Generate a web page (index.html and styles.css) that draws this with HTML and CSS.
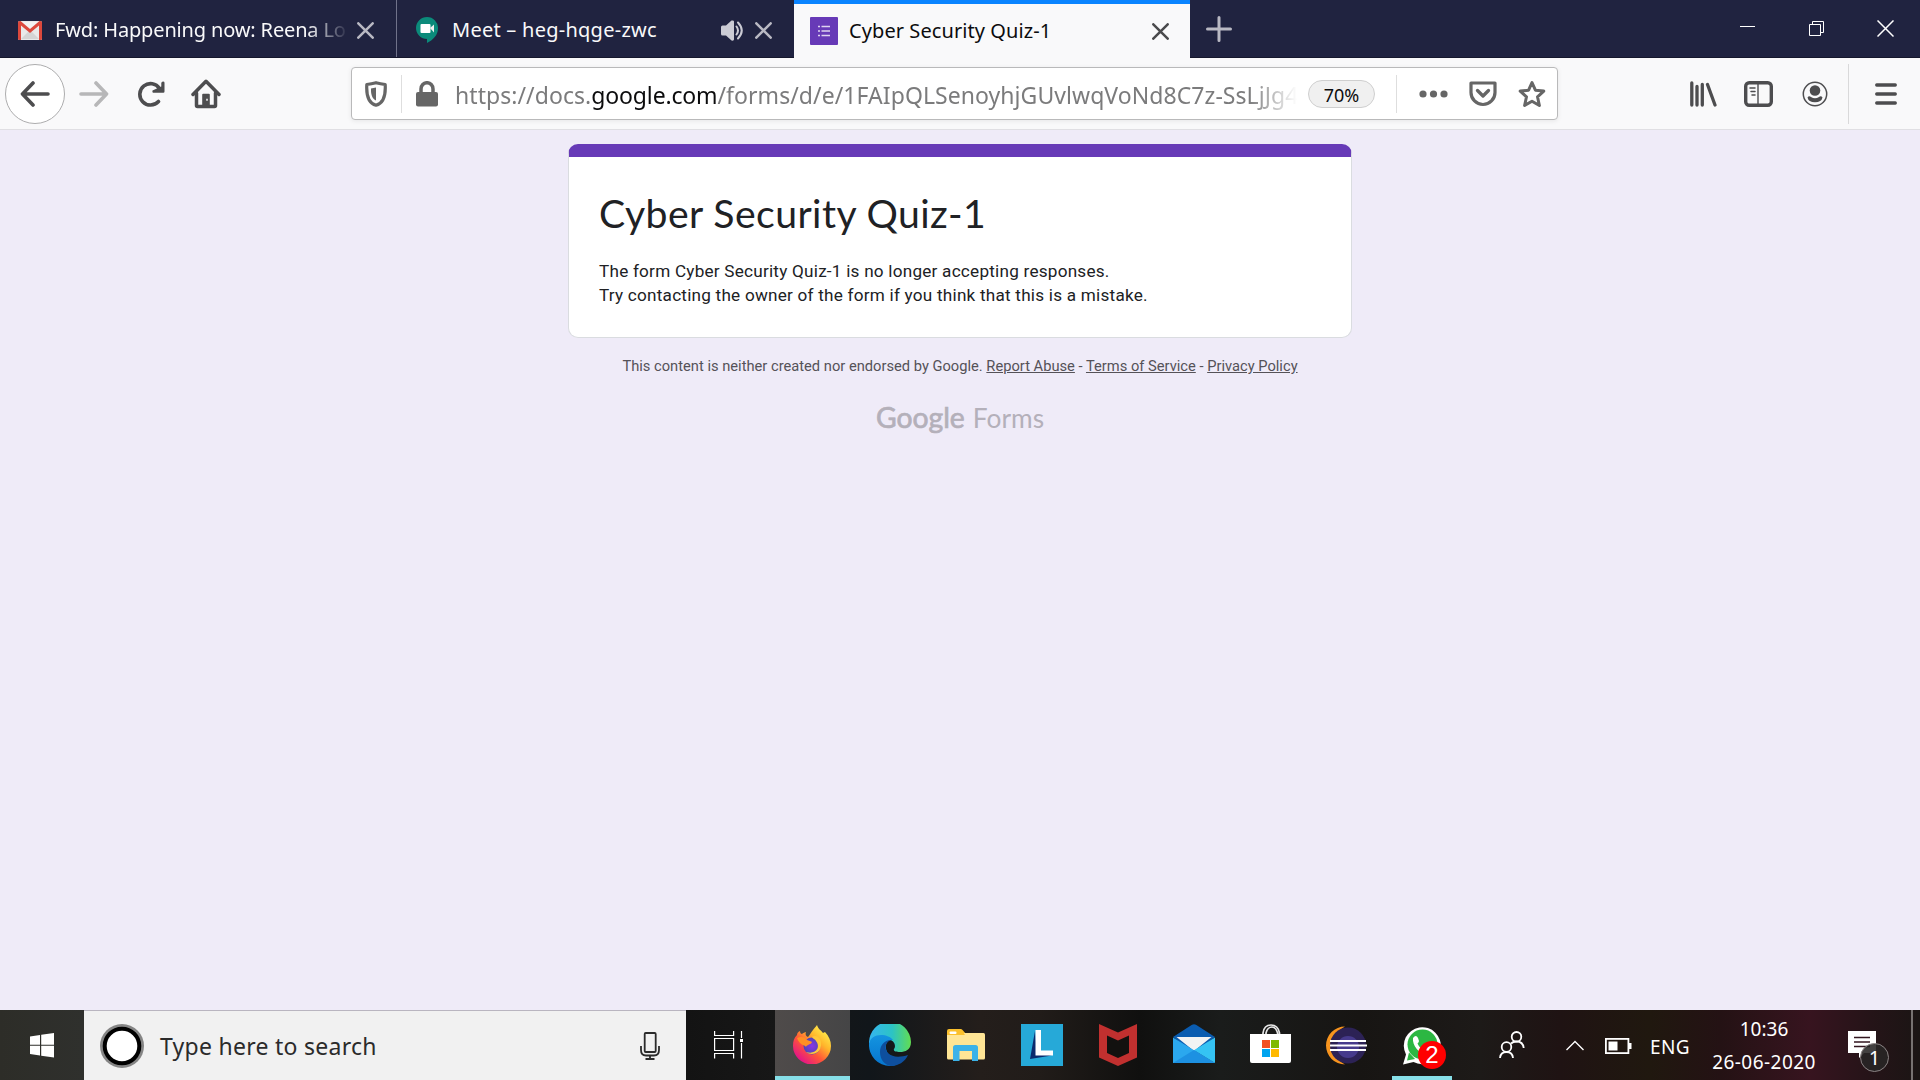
FILE: index.html
```html
<!DOCTYPE html>
<html lang="en">
<head>
<meta charset="utf-8">
<title>Cyber Security Quiz-1</title>
<link rel="stylesheet" href="styles.css">
</head>
<body>
<header class="tabs">
  <div class="tab">
    <svg class="gmail" width="24" height="19" viewBox="0 0 24 19"><rect width="24" height="19" rx="1.5" fill="#e9e9e9"/><path d="M3 18 12 9l9 9z" fill="#d4d4d4"/><path d="M3 3l9 9 9-9v-2H3z" fill="#f2f2f2"/><path d="M0 1.5Q0 0 1.5 0H2.500L12 8 21.500 0h1Q24 0 24 1.500V17.500Q24 19 22.500 19H21V4.500L12 12 3 4.500V19H1.500Q0 19 0 17.500z" fill="#dc483c"/></svg>
    <span class="tab-title fade">Fwd: Happening now: Reena Lo</span>
    <svg class="close" width="17" height="17" viewBox="0 0 17 17"><path d="M1.300 1.300 15.700 15.700M15.700 1.300 1.300 15.700" stroke="#b9b9c3" stroke-width="2.500" stroke-linecap="round"/></svg>
  </div>
  <div class="tab meet-tab">
    <svg class="meet" width="22" height="26" viewBox="0 0 22 26"><path d="M11 0a11 11 0 0 1 11 11.500C22 18 17 23 11 26v-4A11 11 0 0 1 11 0z" fill="#0b8a7a"/><rect x="4.500" y="7" width="10" height="9" rx="1" fill="#fff"/><path d="M14 11l4-3.500v8z" fill="#f0f0f0"/></svg>
    <span class="tab-title">Meet – heg-hqge-zwc</span>
    <svg class="speaker" width="24" height="21" viewBox="0 0 24 21"><path d="M0 7Q0 5.500 1.500 5.500H5L10.500.500Q13 0 13 1.500v18Q13 21 10.500 20.500L5 15.500H1.500Q0 15.500 0 14z" fill="#cbcbd4"/><path d="M15.500 6.500q3 4 0 8M17 2.500q7.500 8 0 16" fill="none" stroke="#cbcbd4" stroke-width="2" stroke-linecap="round"/></svg>
    <svg class="close" width="17" height="17" viewBox="0 0 17 17"><path d="M1.300 1.300 15.700 15.700M15.700 1.300 1.300 15.700" stroke="#b9b9c3" stroke-width="2.500" stroke-linecap="round"/></svg>
  </div>
  <div class="tab active">
    <svg class="forms" width="28" height="28" viewBox="0 0 28 28"><rect width="28" height="28" rx="1" fill="#673ab7"/><path d="M8 9.500h2M8 14h2M8 18.500h2M11.500 9.500H20M11.500 14H20M11.500 18.500H20" stroke="#ded3f0" stroke-width="1.600"/></svg>
    <span class="tab-title">Cyber Security Quiz-1</span>
    <svg class="close" width="17" height="17" viewBox="0 0 17 17"><path d="M1.300 1.300 15.700 15.700M15.700 1.300 1.300 15.700" stroke="#4a4a4c" stroke-width="2.500" stroke-linecap="round"/></svg>
  </div>
  <svg class="plus" width="26" height="26" viewBox="0 0 26 26"><path d="M13 1.500v23M1.500 13h23" stroke="#b9b9c3" stroke-width="3" stroke-linecap="round"/></svg>
  <div class="window-controls">
    <svg class="minimize" width="15" height="17" viewBox="0 0 15 17"><path d="M0 6.500h15" stroke="#fff"/></svg>
    <svg width="15" height="15" viewBox="0 0 15 15" fill="none" stroke="#fff"><path d="M.500 3.500h11v11H.500zM3.500 3.500v-3h11v11h-3"/></svg>
    <svg width="17" height="17" viewBox="0 0 17 17"><path d="M.500.500l16 16M16.500.500l-16 16" stroke="#fff" stroke-width="1.500"/></svg>
  </div>
</header>
<nav class="toolbar">
  <div class="back"><svg width="30" height="26" viewBox="0 0 30 26" fill="none" stroke="#4d4d4f" stroke-width="3.600" stroke-linecap="round" stroke-linejoin="round"><path d="M28 13H3M13 2 2.500 13 13 24"/></svg></div>
  <svg class="forward" width="30" height="26" viewBox="0 0 30 26" fill="none" stroke="#b7b7b8" stroke-width="3.600" stroke-linecap="round" stroke-linejoin="round"><path d="M2 13h25M17 2l10.500 11L17 24"/></svg>
  <svg class="reload" width="27" height="26" viewBox="0 0 27 26"><path d="M21.500 7.500A10.700 10.700 0 1 0 20.500 20.500" fill="none" stroke="#4d4d4f" stroke-width="3.600" stroke-linecap="round"/><path d="M15 11.700h10.300q1.200 0 1.200-1.200V1.800Q26.500.500 25 .500T23.300 2v3.500L14.500 9.500Q14 11.500 15 11.700z" fill="#4d4d4f"/></svg>
  <svg class="home" width="30" height="30" viewBox="0 0 30 30" fill="none" stroke="#4d4d4f" stroke-width="3.500" stroke-linecap="round" stroke-linejoin="round"><path d="M2 15.500 15 2.300 28 15.500"/><path d="M5.500 14v12.500q0 1 1 1h17q1 0 1-1V14"/><path d="M11.200 27V15.800q0-1 1-1h5.600q1 0 1 1V27z" fill="#4d4d4f" stroke="none"/><path d="M16 19.700v2" stroke="#f9f9fa" stroke-width="1.500" stroke-linecap="butt"/></svg>
  <div class="urlbar">
    <svg class="shield" width="22" height="26" viewBox="0 0 22 26"><path d="M11 1.700Q15.500 2.800 20.200 3.500C20.800 14 19 22 11 24.200 3 22 1.200 14 1.800 3.500Q6.500 2.800 11 1.700z" fill="none" stroke="#666" stroke-width="3.200" stroke-linejoin="round"/><path d="M11 6.500v13C7 18 5.800 13 6 7.500z" fill="#666"/></svg>
    <i class="divider"></i>
    <svg class="lock" width="22" height="26" viewBox="0 0 22 26"><rect y="11" width="22" height="14.500" rx="2" fill="#666"/><path d="M5 12V8a6 6.300 0 0 1 12 0v4" fill="none" stroke="#666" stroke-width="3.500"/></svg>
    <span class="url">https://docs.<b>google.com</b>/forms/d/e/1FAIpQLSenoyhjGUvlwqVoNd8C7z-SsLjJg4</span>
    <span class="zoom-level">70%</span>
    <i class="divider second"></i>
    <svg class="dots" width="29" height="8" viewBox="0 0 29 8" fill="#666"><circle cx="4" cy="4" r="3.600"/><circle cx="14.500" cy="4" r="3.600"/><circle cx="25" cy="4" r="3.600"/></svg>
    <svg class="pocket" width="28" height="26" viewBox="0 0 28 26" fill="none" stroke="#666" stroke-linecap="round" stroke-linejoin="round"><path d="M2 2h24v9.500a12 12 0 0 1-24 0z" stroke-width="3.200"/><path d="M8.500 9.500 14 15l5.500-5.500" stroke-width="3.300"/></svg>
    <svg class="star" width="28" height="28" viewBox="0 0 28 28"><path d="M14 2.500l3.400 7.700 8.400.9-6.300 5.700 1.900 8.700L14 21.200l-7.400 4.300 1.900-8.700-6.300-5.700 8.400-.9z" fill="none" stroke="#666" stroke-width="3" stroke-linejoin="round"/></svg>
  </div>
  <svg class="library" width="27" height="26" viewBox="0 0 27 26" fill="none" stroke="#4d4d4f" stroke-width="3.300" stroke-linecap="round"><path d="M1.800 2v22M7 5.500V24M12.300 3.500V24M17.500 3.500 25 24"/></svg>
  <svg class="sidebar" width="29" height="26" viewBox="0 0 29 26" fill="none" stroke="#4d4d4f"><rect x="1.700" y="1.700" width="25.600" height="22.600" rx="3.500" stroke-width="3.400"/><path d="M14 2v22" stroke-width="1.400"/><path d="M6 7h5M7 10.500h4M8 14h3" stroke-width="1.500" stroke-linecap="round"/></svg>
  <svg class="account" width="26" height="26" viewBox="0 0 26 26"><circle cx="13" cy="13" r="11.700" fill="none" stroke="#4d4d4f" stroke-width="1.500"/><circle cx="13" cy="9.500" r="5.300" fill="#4d4d4f"/><path d="M5.500 16.500q1.500-2 3.500-.500 4 2.700 8 0 2-1.500 3.500.500-1 4.800-7.500 4.800t-7.500-4.800z" fill="#4d4d4f"/></svg>
  <i class="toolbar-divider"></i>
  <svg class="menu" width="22" height="22" viewBox="0 0 22 22"><path d="M1.700 2h18.600M1.700 11h18.600M1.700 20h18.600" stroke="#4d4d4f" stroke-width="3.300" stroke-linecap="round"/></svg>
</nav>
<main class="page">
  <section class="card">
    <h1>Cyber Security Quiz-1</h1>
    <p>The form Cyber Security Quiz-1 is no longer accepting responses.<br>Try contacting the owner of the form if you think that this is a mistake.</p>
  </section>
  <p class="legal">This content is neither created nor endorsed by Google. <a>Report Abuse</a> - <a>Terms of Service</a> - <a>Privacy Policy</a></p>
  <div class="logo"><span class="google">Google</span><span class="product">Forms</span></div>
</main>
<footer class="taskbar">
  <div class="start"><svg width="24" height="25" viewBox="0 0 24 25" fill="#fff"><path d="M0 3.500 10 2v9.800H0zM11.200 1.800 24 0v11.800H11.200zM0 12.800h10v9.700L0 21zM11.200 12.800H24V24.500l-12.800-1.800z"/></svg></div>
  <div class="search">
    <svg class="cortana" width="44" height="44" viewBox="0 0 44 44"><circle cx="22" cy="22" r="22" fill="#858585"/><circle cx="22" cy="22" r="17.300" fill="#fff" stroke="#000" stroke-width="4"/></svg>
    <span class="search-text">Type here to search</span>
    <svg class="mic" width="20" height="28" viewBox="0 0 20 28" fill="none" stroke="#2b2b2b" stroke-width="1.800"><rect x="4.700" y="1" width="11" height="19" rx="1"/><path d="M1 14v4q0 5.500 5 5.500h8q5 0 5-5.500v-4M10 23.500V27M5.500 27h9"/></svg>
  </div>
  <div class="task view"><svg width="30" height="28" viewBox="0 0 30 28" fill="none" stroke="#fff" stroke-width="1.200"><path d="M.600 0v4.500h19V0M.600 7.500h19v12H.600zM.600 27.500V22.500h19v5M27.500 0v7M27.500 12v15.500"/><rect x="26" y="8" width="3" height="3" fill="#fff" stroke="none"/></svg></div>
  <div class="task firefox on"><svg width="38" height="39" viewBox="0 0 38 39"><defs><linearGradient id="fx" x1=".9" y1=".1" x2=".2" y2=".9"><stop offset="0" stop-color="#fff44f"/><stop offset=".35" stop-color="#ffb52b"/><stop offset=".65" stop-color="#ff5538"/><stop offset="1" stop-color="#e31587"/></linearGradient><radialGradient id="fxg"><stop offset="0" stop-color="#8b35e8"/><stop offset="1" stop-color="#4a47b5"/></radialGradient></defs><path d="M24 0c1 4 4 5 6 8l2-1c4 4 6 9 6 14A19 18.500 0 0 1 0 21C0 16 1 13 4 10c0-2 1-3 3-4 0 2 1 3 2 3 1-1 3-2 4-2-1 3 0 4 2 5 2-2 3-5 5-7 1-2 3-3 4-5z" fill="url(#fx)"/><circle cx="19" cy="21" r="8.500" fill="url(#fxg)"/><path d="M4 13c4-2 8-1 10 2 2 1 4 1 5 2-1 3-5 2-6 5-2-3-6-1-9-9z" fill="#ff9024"/><path d="M19 12c5-3 10 2 9 9-1 8-10 10-15 6 10 3 15-5 10-11-1-2-3-2-4-4z" fill="#ffc83a"/></svg></div>
  <div class="task"><svg width="42" height="42" viewBox="0 0 42 42"><defs><linearGradient id="eg"><stop offset="0" stop-color="#35b5ef"/><stop offset=".55" stop-color="#2cc3c5"/><stop offset="1" stop-color="#62dd52"/></linearGradient><linearGradient id="eb" x1="0" y1="0" x2="0" y2="1"><stop offset="0" stop-color="#1494df"/><stop offset="1" stop-color="#0675cf"/></linearGradient></defs><path d="M0 19A21 21 0 0 1 42 18c0 8-6 10-11 10-4 0-7-1-6-3 2-2 1-8-4-9-8 0-12 5-15 12z" fill="url(#eg)"/><path d="M0 20c1-6 6-9 12-9 5 0 10 2 12 5-6-1-9 5-6 12 4 7 12 10 18 5C32 39 27 42 21 42A21 21 0 0 1 0 20z" fill="url(#eb)"/><path d="M11 28c0-6 4-12 11-12-6 2-7 9-3 13 5 5 13 4 20 2-3 7-10 11-17 11-6-1-11-6-11-14z" fill="#0e4f9e"/></svg></div>
  <div class="task"><svg width="38" height="32" viewBox="0 0 38 32"><path d="M0 2Q0 0 2 0h12q1 0 2 1.500L19 5H0z" fill="#fbc02d"/><rect x="0" y="4" width="38" height="26.500" rx="1.500" fill="#ffe595"/><path d="M0 3h16l2 3H0z" fill="#fbc02d"/><rect x="2.500" y="2.500" width="7" height="2.500" rx="1" fill="#fff"/><path d="M6 18.500q0-2.500 2.500-2.500h20q2.500 0 2.500 2.500V32h-6V22H12.500v10H6z" fill="#3bb2e8"/></svg></div>
  <div class="task"><svg width="42" height="42" viewBox="0 0 42 42"><rect width="42" height="42" fill="#26a9d8"/><path d="M14 7 9 35l22-3.500-15-2z" fill="#0b2a6d"/><path d="M14.500 6h5.500v20.500H32v5H14.500z" fill="#fff"/></svg></div>
  <div class="task"><svg width="38" height="42" viewBox="0 0 38 42"><path d="M0 0 19 8.500 38 0v33.500L19 42 0 33.500z" fill="#c1302f"/><path d="M8 11.500 19 16.500 30 11.500V29L19 34 8 29z" fill="#12110f"/></svg></div>
  <div class="task"><svg class="mail" width="42" height="39" viewBox="0 0 42 39"><path d="M0 13 19 .800q2-1.200 4 0L42 13 21 29z" fill="#0a5cb0"/><path d="M3.500 13h35L21 27z" fill="#f3f3f3"/><path d="M0 13.500 42 39H0z" fill="#2ba8ee"/><path d="M42 13.500 21 26.200 42 39z" fill="#35c3f3"/><path d="M0 39h42L21 26z" fill="#1d91e2"/></svg></div>
  <div class="task"><svg class="store" width="41" height="39" viewBox="0 0 41 39"><path d="M13 11V9q1-8 8-8t8.500 8v2M16 11V9q1.500-6 6-6t6 8" fill="none" stroke="#e8e8e8" stroke-width="1.700"/><path d="M0 10h41v27q0 2-2 2H2q-2 0-2-2z" fill="#fff"/><path fill="#f25022" d="M12 16h8v8h-8z"/><path fill="#7fba00" d="M21 16h8v8h-8z"/><path fill="#00a4ef" d="M12 25h8v8h-8z"/><path fill="#ffb900" d="M21 25h8v8h-8z"/></svg></div>
  <div class="task"><svg width="42" height="39" viewBox="0 0 42 39"><path d="M20 .500A19 19 0 0 0 20 38.500 22 22 0 0 1 20 .500z" fill="#f7941e"/><circle cx="23" cy="19.500" r="18" fill="#2c2255"/><circle cx="23" cy="21" r="11" fill="#463a8c"/><path d="M5 15h36M5 19.500h37M5 24h36" stroke="#fff" stroke-width="2.200"/></svg></div>
  <div class="task whatsapp">
    <svg width="38" height="39" viewBox="0 0 38 39"><path d="M0 38.500 3 28.500A18.500 18.500 0 1 1 10.500 36z" fill="#fff"/><circle cx="19.500" cy="18.500" r="15" fill="#2cb742"/><path d="M4 34.500l2-8 6 6.500z" fill="#2cb742"/><path d="M10 12q3-4 5 0l1 3q0 1-1.500 2.500 2 4.500 6.500 6.500l2.500-2 5 2.500q0 4-5 4.500C16 28 9 19 10 12z" fill="#fff"/></svg>
    <span class="badge">2</span>
  </div>
  <div class="tray">
    <svg class="people" width="26" height="28" viewBox="0 0 26 28" fill="none" stroke="#fff" stroke-width="1.800"><circle cx="17.500" cy="5.800" r="4.800"/><circle cx="7.500" cy="16" r="4.800"/><path d="M1 27q.500-6 6.500-6t6.500 6M12 12.500q2-2 5.500-2 6.500 0 7.200 6.500"/></svg>
    <svg class="chevron" width="18" height="11" viewBox="0 0 18 11"><path d="M.500 10 9 1.500l8.500 8.500" fill="none" stroke="#fff" stroke-width="1.400"/></svg>
    <svg class="battery" width="27" height="16" viewBox="0 0 27 16"><rect x=".900" y=".900" width="22.500" height="14.200" fill="none" stroke="#fff" stroke-width="1.800"/><path d="M3.500 3.500h9v9h-9zM24 5h2.500v6H24z" fill="#fff"/></svg>
    <span class="lang">ENG</span>
    <div class="clock"><span>10:36</span><span class="date">26-06-2020</span></div>
    <div class="action">
      <svg width="28" height="28" viewBox="0 0 28 28"><path d="M0 0h28v22H16l-5 5v-5H0z" fill="#fff"/><path d="M6 6.500h16M6 11h16M6 15.500h16" stroke="#33151f" stroke-width="1.300"/></svg>
      <span class="count">1</span>
    </div>
    <i class="desktop"></i>
  </div>
</footer>
</body>
</html>
```
FILE: styles.css
```css
* { box-sizing: border-box; }
body {
  margin: 0;
  width: 1920px;
  height: 1080px;
  overflow: hidden;
  display: flex;
  flex-direction: column;
  font-family: "Noto Sans", "Open Sans", sans-serif;
}
svg { display: block; flex: none; }

/* Tab strip */
.tabs {
  height: 58px;
  flex: none;
  display: flex;
  align-items: center;
  background: #202340;
  border-bottom: 1px solid #15172c;
}
.tab {
  width: 397px;
  height: 57px;
  flex: none;
  display: flex;
  align-items: center;
  padding: 3px 22px 0 18px;
  border-right: 1px solid #70728a;
  color: #f9f9fa;
}
.meet-tab { padding-right: 21px; padding-left: 19px; border-right-color: #202340; }
.tab.active {
  width: 396px;
  height: 58px;
  margin-bottom: -1px;
  background: #f9f9fa;
  border-top: 4px solid #0a84ff;
  border-right: 0;
  color: #0c0c0d;
  padding: 0 21px 0 16px;
}
.tab-title { margin-left: 13px; flex: 1; font-size: 20px; line-height: 28px; letter-spacing: -.15px; white-space: nowrap; overflow: hidden; }
.meet-tab .tab-title { margin-left: 14px; letter-spacing: .25px; }
.active .tab-title { margin-left: 11px; letter-spacing: .08px; }
.fade { -webkit-mask-image: linear-gradient(to left, transparent, #000 42px); mask-image: linear-gradient(to left, transparent, #000 42px); }
.close { margin-left: 8px; }
.speaker { margin-right: 2px; }
.plus { margin: 1px 0 0 16px; }
.window-controls { margin-left: auto; padding-right: 26px; display: flex; align-items: center; gap: 53px; }
.minimize { margin-right: 1px; }

/* Navigation toolbar */
.toolbar {
  height: 72px;
  flex: none;
  display: flex;
  align-items: center;
  background: #f9f9fa;
  border-bottom: 1px solid #e0dfe3;
  padding-left: 5px;
}
.back { width: 60px; height: 60px; border: 1px solid #adadae; border-radius: 50%; background: #fff; display: flex; align-items: center; justify-content: center; }
.forward { margin-left: 14px; }
.reload { margin-left: 29px; }
.home { margin-left: 26px; }
.urlbar {
  width: 1207px;
  height: 53px;
  margin-left: 130px;
  display: flex;
  align-items: center;
  background: #fff;
  border: 1px solid #b9b9ba;
  border-radius: 4px;
  box-shadow: 0 1px 5px rgba(0, 0, 0, .08);
  padding-left: 13px;
}
.divider { width: 1px; height: 38px; background: #dedede; margin: 0 14px; }
.url {
  width: 842px;
  margin: 2px 0 0 17px;
  overflow: hidden;
  white-space: nowrap;
  font-size: 23px;
  line-height: 34px;
  letter-spacing: .06px;
  color: #7b7b7c;
  -webkit-mask-image: linear-gradient(to left, transparent, #000 48px);
  mask-image: linear-gradient(to left, transparent, #000 48px);
}
.url b { font-weight: 400; color: #0c0c0d; letter-spacing: -.15px; }
.zoom-level { width: 67px; height: 28px; margin-left: 11px; border: 1px solid #cfcfcf; border-radius: 14px; background: #f0f0f0; font-size: 18px; line-height: 28px; text-align: center; color: #0c0c0d; }
.second { margin: 0 22px 0 21px; }
.pocket { margin-left: 21px; }
.star { margin-left: 21px; }
.library { margin-left: 132px; }
.sidebar { margin-left: 27px; }
.account { margin-left: 29px; }
.toolbar-divider { width: 1px; height: 60px; background: #d9d9da; margin-left: 20px; }
.menu { margin-left: 26px; }

/* Form page */
.page { flex: 1; display: flex; flex-direction: column; align-items: center; background: #efebf8; padding-top: 14px; }
.card { width: 784px; height: 194px; background: #fff; border: 1px solid #dadce0; border-top: 13px solid #673ab7; border-radius: 10px; padding: 30px 30px 0; color: #202124; }
.card h1 { margin: 0; font: 400 39.200px/52px Lato, sans-serif; letter-spacing: .42px; }
.card p { margin: 20px 0 0; font: 17.150px/24px Roboto, sans-serif; letter-spacing: .23px; }
.legal { margin: 18px 0 0; font: 14.700px/20px Roboto, sans-serif; color: #555258; }
.legal a { text-decoration: underline; }
.logo { display: flex; align-items: baseline; gap: 8px; margin-top: 23px; font: 26.300px/36px Lato, sans-serif; color: #b4b0ba; white-space: nowrap; }
.google { font-size: 28.300px; -webkit-text-stroke: .7px #b4b0ba; }

/* Taskbar */
.taskbar { height: 70px; flex: none; display: flex; background: linear-gradient(90deg, #2d2d28 0, #2f302d 84px, #131313 686px, #171717 775px, #11161a 870px, #241e1b 980px, #211c19 1040px, #10100f 1140px, #1a1c1b 1220px, #171513 1360px, #1d1a18 1480px, #1f1313 1560px, #20180f 1650px, #241214 1720px, #37141f 1810px, #251418 1870px, #1b1514 1920px); color: #fff; }
.start { width: 84px; padding-left: 30px; display: flex; align-items: center; }
.search { width: 602px; display: flex; align-items: center; background: #f1f1f1; border-top: 1px solid #b9b5c0; padding: 0 26px 0 16px; }
.search-text { flex: 1; margin-left: 16px; font-size: 23px; line-height: 34px; letter-spacing: .27px; color: #2b2b2b; white-space: nowrap; }
.task { position: relative; width: 76px; flex: none; display: flex; align-items: center; justify-content: center; }
.view { width: 89px; padding-right: 4px; }
.on { background: linear-gradient(90deg, #4f4b4a, #454546); border-bottom: 4px solid #87dfe8; width: 75px; margin-right: 2px; }
.firefox { padding: 3px 1px 0 0; }
.mail, .store { margin-bottom: 3px; }
.whatsapp::after { content: ""; position: absolute; left: 8px; bottom: 0; width: 60px; height: 4px; background: #87dfe8; }
.badge { position: absolute; left: 34px; top: 31px; width: 28px; height: 28px; border-radius: 50%; background: #f00; font: 24px/28px "Liberation Sans", sans-serif; text-align: center; }
.tray { flex: 1; display: flex; align-items: center; padding-left: 39px; }
.chevron { margin-left: 41px; }
.battery { margin: 2px 0 0 21px; }
.lang { margin: 3px 0 0 18px; width: 42px; font-size: 19px; letter-spacing: .4px; }
.clock { width: 106px; margin-left: 19px; display: flex; flex-direction: column; align-items: center; font-size: 19px; line-height: 33px; padding-top: 2px; white-space: nowrap; }
.date { letter-spacing: .45px; }
.action { position: relative; margin-left: 31px; }
.count { position: absolute; left: 12px; top: 12px; width: 29px; height: 29px; border: 1px solid #8b8485; border-radius: 50%; background: rgba(40, 38, 38, .88); font-size: 20px; line-height: 27px; text-align: center; }
.desktop { width: 2px; height: 70px; background: #777271; margin-left: 35px; }
```
